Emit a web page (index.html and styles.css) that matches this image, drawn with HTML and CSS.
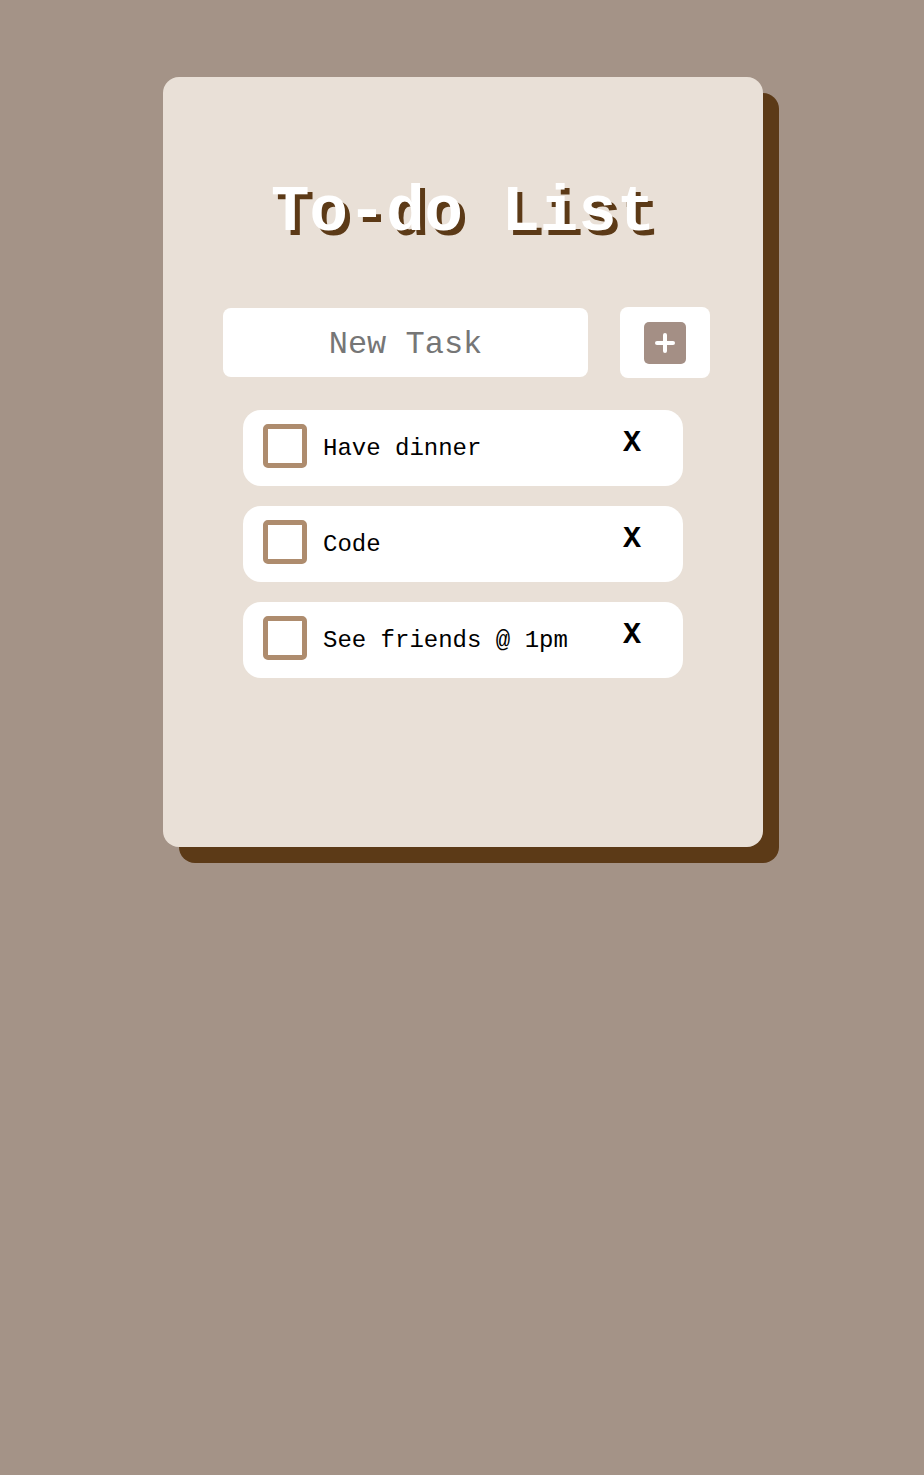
FILE: index.html
```html
<!DOCTYPE html>
<html lang="en">
<head>
  <meta charset="UTF-8">
  <meta name="viewport" content="width=device-width, initial-scale=1.0">
  <title>To-do List</title>
  <link rel="stylesheet" href="styles.css">
</head>
<body>
  <div class="card">
    <h1 class="title">To-do List</h1>
    <div class="add-row">
      <input class="task-input" type="text" placeholder="New Task">
      <button class="add-btn" type="button"><span class="plus"></span></button>
    </div>
    <ul class="tasks">
      <li class="task">
        <span class="check"></span>
        <span class="task-text">Have dinner</span>
        <span class="remove">X</span>
      </li>
      <li class="task">
        <span class="check"></span>
        <span class="task-text">Code</span>
        <span class="remove">X</span>
      </li>
      <li class="task">
        <span class="check"></span>
        <span class="task-text">See friends @ 1pm</span>
        <span class="remove">X</span>
      </li>
    </ul>
  </div>
</body>
</html>
```

FILE: styles.css
```css
html,
body {
      margin: 0;
      padding: 0;
}

body {
      background: #a49387;
      font-family: "Liberation Mono", "Courier New", monospace;
      height: 1475px;
      overflow: hidden;
}

.card {
      width: 600px;
      height: 770px;
      margin: 77px 0 0 163px;
      background: #e9e0d7;
      border-radius: 16px;
      box-shadow: 16px 16px 0 #5c3a17;
      box-sizing: border-box;
      padding-top: 100px;
}

.title {
      margin: 0;
      text-align: center;
      color: #fff;
      font-size: 64px;
      line-height: 72px;
      font-weight: bold;
      text-shadow: 5px 5px 0 #5c3a17;
}

.add-row {
      display: flex;
      align-items: center;
      gap: 32px;
      margin-top: 58px;
      padding-left: 60px;
}

.task-input {
      width: 365px;
      height: 69px;
      box-sizing: border-box;
      border: none;
      border-radius: 8px;
      background: #fff;
      text-align: center;
      padding-top: 4px;
      font: 32px "Liberation Mono", "Courier New", monospace;
      outline: none;
}

.task-input::placeholder {
      color: #767676;
}

.add-btn {
      width: 90px;
      height: 71px;
      border: none;
      border-radius: 8px;
      background: #fff;
      display: flex;
      align-items: center;
      justify-content: center;
      padding: 0;
}

.plus {
      position: relative;
      width: 42px;
      height: 42px;
      border-radius: 5px;
      background: #a48f85;
}

.plus::before,
.plus::after {
      content: "";
      position: absolute;
      left: 50%;
      top: 50%;
      background: #fff;
      border-radius: 2px;
}

.plus::before {
      width: 20px;
      height: 4px;
      margin: -2px 0 0 -10px;
}

.plus::after {
      width: 4px;
      height: 20px;
      margin: -10px 0 0 -2px;
}

.tasks {
      list-style: none;
      margin: 32px 80px 0;
      padding: 0;
      display: flex;
      flex-direction: column;
      gap: 20px;
}

.task {
      height: 76px;
      background: #fff;
      border-radius: 18px;
      display: flex;
      align-items: center;
      padding-left: 20px;
      gap: 16px;
}

.check {
      width: 44px;
      height: 44px;
      box-sizing: border-box;
      border: 5px solid #ae8c6e;
      border-radius: 5px;
      margin-top: -4px;
}

.task-text {
      flex: 1;
      font-size: 24px;
      color: #000;
}

.remove {
      font-size: 30px;
      font-weight: bold;
      margin-right: 42px;
      margin-top: -10px;
}
```
